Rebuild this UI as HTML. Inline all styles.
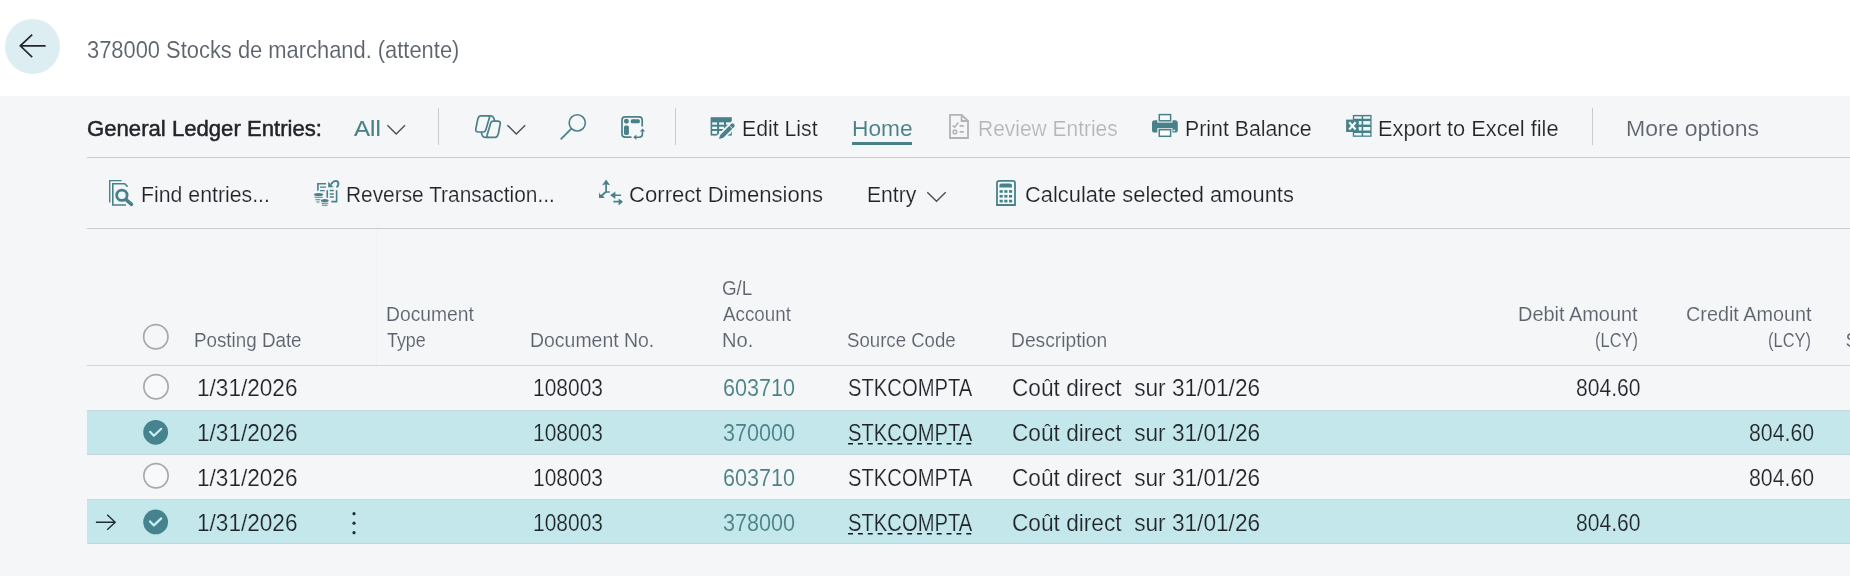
<!DOCTYPE html>
<html lang="en"><head><meta charset="utf-8"><title>General Ledger Entries</title>
<style>
html,body{margin:0;padding:0;}
body{width:1850px;height:576px;overflow:hidden;background:#f5f6f8;font-family:"Liberation Sans",sans-serif;position:relative;}
#texts{position:absolute;left:0;top:0;width:1850px;height:576px;will-change:transform;}
#layer{position:absolute;left:0;top:0;width:1850px;height:576px;display:block;}
.t{position:absolute;white-space:pre;line-height:1;transform-origin:0 0;font-family:"Liberation Sans",sans-serif;}
</style></head>
<body>
<svg id="layer" width="1850" height="576" viewBox="0 0 1850 576">
<rect x="0" y="0" width="1850" height="96" fill="#ffffff"/>
<circle cx="32.5" cy="46.5" r="27.5" fill="#ddeef3"/>
<path d="M45.6 45.8H20.6M32.2 34.7L20.3 45.8L32.2 57.1" fill="none" stroke="#23282c" stroke-width="1.7"/>
<rect x="87" y="157" width="1763" height="1" fill="#c9cbce"/>
<rect x="87" y="228" width="1763" height="1" fill="#c9cbce"/>
<rect x="438" y="108" width="1" height="37" fill="#c9cbce"/>
<rect x="675" y="108" width="1" height="37" fill="#c9cbce"/>
<rect x="1592" y="108" width="1" height="37" fill="#c9cbce"/>
<rect x="376" y="229" width="1" height="136" fill="#f0f1f4"/>
<rect x="87" y="365" width="1763" height="1" fill="#d2d4d7"/>
<rect x="87" y="410" width="1763" height="45" fill="#c3e7eb"/>
<rect x="87" y="410" width="1763" height="1" fill="#c5d9dc"/>
<rect x="87" y="454" width="1763" height="1" fill="#c8d4d7"/>
<rect x="87" y="499" width="1763" height="45" fill="#c3e7eb"/>
<rect x="87" y="499" width="1763" height="1" fill="#c5d9dc"/>
<rect x="87" y="543" width="1763" height="1" fill="#c8d4d7"/>
<rect x="852" y="142" width="60" height="3" fill="#4a8187"/>
<path d="M387.4 125.3L396.2 134L405 125.3" fill="none" stroke="#4b5056" stroke-width="1.4"/>
<path d="M507.4 125.2L516.3 133.9L525.2 125.2" fill="none" stroke="#4b5056" stroke-width="1.4"/>
<path d="M927.3 192.3L936.5 201.3L945.7 192.3" fill="none" stroke="#4b5056" stroke-width="1.4"/>
<circle cx="155.8" cy="336.8" r="12.15" fill="none" stroke="#a7a9ad" stroke-width="1.7"/>
<circle cx="156" cy="386.8" r="12.15" fill="#f8f9fb" stroke="#a7a9ad" stroke-width="1.7"/>
<circle cx="156" cy="475.8" r="12.15" fill="#f8f9fb" stroke="#a7a9ad" stroke-width="1.7"/>
<circle cx="155.65" cy="432.3" r="12.4" fill="#47828f"/>
<path d="M150.05 431.8L153.9 435.8L161.25 428.8" fill="none" stroke="#c9eef4" stroke-width="2.2" stroke-linecap="round" stroke-linejoin="round"/>
<circle cx="155.65" cy="521.9" r="12.4" fill="#47828f"/>
<path d="M150.05 521.4L153.9 525.4L161.25 518.4" fill="none" stroke="#c9eef4" stroke-width="2.2" stroke-linecap="round" stroke-linejoin="round"/>
<path d="M95.9 522.3H115M107.2 514.7L115.2 522.3L107.2 529.8" fill="none" stroke="#1f2d33" stroke-width="1.4"/>
<circle cx="354" cy="513.7" r="1.6" fill="#1f2d33"/>
<circle cx="354" cy="523.2" r="1.6" fill="#1f2d33"/>
<circle cx="354" cy="532.7" r="1.6" fill="#1f2d33"/>
<path d="M848.1 443.8H972.2" stroke="#101c22" stroke-width="1.6" stroke-dasharray="4.9 4.95"/>
<path d="M848.1 533.8H972.2" stroke="#101c22" stroke-width="1.6" stroke-dasharray="4.9 4.95"/>
<g fill="none" stroke="#48818a" stroke-width="1.7" stroke-linejoin="round"><path d="M480.8 115.9H488.2Q490 115.9 489.4 117.7L485.8 130Q485.2 132 483.2 132H478.4Q475.2 132 475.8 129L477.5 120.6Q478.3 115.9 480.8 115.9Z"/><path d="M493.2 121.2H497.6Q500.8 121.2 500.2 124L498.5 133Q497.6 137.4 495 137.4H488.6Q486.4 137.4 487 135.6L490.8 122.8Q491.3 121.2 493.2 121.2Z"/><path d="M488.2 115.9H490.8Q493 115.9 493.8 118L494.8 121.2"/><path d="M488.6 137.4H485.4Q483 137.4 482.2 135.2L481.2 132"/></g>
<g fill="none" stroke="#48818a"><circle cx="577.25" cy="122.85" r="8.1" stroke-width="1.6"/><path d="M571.4 128.7L560.7 139.4" stroke-width="1.8"/></g>
<g fill="none" stroke="#48818a" stroke-width="1.7"><path d="M642.2 126.4V120Q642.2 116.8 639 116.8H625.2Q622 116.8 622 120V134Q622 137.2 625.2 137.2H631.5"/><path d="M642.4 130V134Q642.4 137.2 639.2 137.2H635.2" stroke-width="1.6"/></g>
<g fill="#48818a"><circle cx="626.4" cy="121.2" r="2.45"/><rect x="630.7" y="119.3" width="9.2" height="3.9" rx="1.5"/><rect x="624" y="125.6" width="4.9" height="9.3" rx="1.7"/><path d="M639.9 131.6L642.5 128.4L645.1 131.6Z"/><path d="M636.4 134.5L633.3 137.2L636.4 139.9Z"/></g>
<rect x="710.6" y="117.2" width="21.2" height="18.4" fill="#48818a"/>
<rect x="712.2" y="122.4" width="4.9" height="2.3" fill="#eefafb"/>
<rect x="712.2" y="126.7" width="4.9" height="2.3" fill="#eefafb"/>
<rect x="712.2" y="131" width="4.9" height="2.9" fill="#eefafb"/>
<rect x="719.1" y="122.4" width="4.9" height="2.3" fill="#eefafb"/>
<rect x="719.1" y="126.7" width="4.9" height="2.3" fill="#eefafb"/>
<rect x="719.1" y="131" width="4.9" height="2.9" fill="#eefafb"/>
<rect x="726" y="122.4" width="4.9" height="2.3" fill="#eefafb"/>
<rect x="726" y="126.7" width="4.9" height="2.3" fill="#eefafb"/>
<rect x="726" y="131" width="4.9" height="2.9" fill="#eefafb"/>
<path d="M719.6 138.3L734.2 124" stroke="#f5f6f8" stroke-width="7.5" stroke-linecap="round"/>
<path d="M722.6 135.4L732.6 125.6" stroke="#48818a" stroke-width="4.2" stroke-linecap="round"/>
<path d="M718.9 139L720.4 134.6L723.6 137.7Z" fill="#48818a"/>
<path d="M729.2 125.4L732.9 129" stroke="#e4f3f5" stroke-width="0.9"/>
<g fill="none" stroke="#b1b3b7" stroke-width="1.8"><path d="M950 114.9H961.6L968 121V138H950Z"/><path d="M961.6 114.9V121H968"/><path d="M952.6 125.6L954.6 127.2L958.4 122.4" stroke-width="1.6"/><path d="M959.6 125.8H963.8M959.6 131.9H963.8"/><circle cx="954.9" cy="131.9" r="1.8" stroke-width="1.5"/></g>
<rect x="1152" y="120.2" width="25.8" height="12.3" rx="2.6" fill="#48818a"/>
<rect x="1157.3" y="113" width="15.2" height="9.6" fill="#f5f6f8"/>
<rect x="1159.3" y="114.6" width="11.3" height="6.2" fill="#f4fbfc" stroke="#48818a" stroke-width="1.5"/>
<rect x="1157.3" y="128" width="15.2" height="10" fill="#f5f6f8"/>
<rect x="1159.3" y="129.7" width="11.3" height="6.6" fill="#ffffff" stroke="#48818a" stroke-width="1.5"/>
<rect x="1157.3" y="126.6" width="15.2" height="1.6" fill="#48818a"/>
<rect x="1173.2" y="129.7" width="1.9" height="1.5" fill="#def2f4"/>
<rect x="1352.8" y="114.9" width="18.8" height="21.9" fill="#48818a"/>
<rect x="1354.2" y="116.4" width="7.4" height="2.3" fill="#f2fbfc"/>
<rect x="1354.2" y="121.1" width="7.4" height="3.5" fill="#f2fbfc"/>
<rect x="1354.2" y="127" width="7.4" height="3.5" fill="#f2fbfc"/>
<rect x="1354.2" y="133" width="7.4" height="2.5" fill="#f2fbfc"/>
<rect x="1363.2" y="116.4" width="7.1" height="2.3" fill="#f2fbfc"/>
<rect x="1363.2" y="121.1" width="7.1" height="3.5" fill="#f2fbfc"/>
<rect x="1363.2" y="127" width="7.1" height="3.5" fill="#f2fbfc"/>
<rect x="1363.2" y="133" width="7.1" height="2.5" fill="#f2fbfc"/>
<rect x="1346.1" y="119.6" width="12.7" height="12.4" fill="#48818a"/>
<path d="M1349.2 122.3L1355.6 129.5M1355.6 122.3L1349.2 129.5" stroke="#f2fbfc" stroke-width="2.1"/>
<g fill="none" stroke="#48818a"><path d="M109.7 202.4V180.6H121.6" stroke-width="1.4"/><path d="M126 205H112.8V183.7H124.7L127.6 186.6" stroke-width="1.6"/></g>
<circle cx="121.9" cy="195.25" r="7.6" fill="#f5f6f8"/>
<circle cx="121.9" cy="195.25" r="5.2" fill="#f1f9fa" stroke="#48818a" stroke-width="2.8"/>
<path d="M126 199.6L131.5 204.4" stroke="#48818a" stroke-width="3.5" stroke-linecap="round"/>
<g fill="none" stroke="#48818a" stroke-width="1.6"><path d="M317.9 190.8V183.7H326"/><path d="M320 187.1H326M320 190.6H324.7" stroke-width="1.3"/><path d="M327.25 190.2V197.8"/><path d="M329.75 190.6H333.8M329.75 194H333.8M329.75 196.9H333.8" stroke-width="1.5"/><path d="M336.6 190.2V201.6H331.3"/><path d="M331 184.4Q333.2 180.9 335.8 180.9Q338.6 181.1 338.4 184.2Q338.2 186.4 336.4 187.1" stroke-width="1.9"/><path d="M314.6 197.3H322.6M315.4 199.7H320.4M316.4 202H319.6M321.4 203.2H328.2M322 205.2H327.6" stroke-width="1.1"/></g>
<g fill="#48818a"><path d="M328.2 181.7V187.2H333.6Z"/><ellipse cx="318.6" cy="194.4" rx="4.6" ry="1.5"/><ellipse cx="324.8" cy="200.6" rx="3.9" ry="1.7"/></g>
<g fill="none" stroke="#48818a" stroke-width="1.7"><path d="M606.1 182V192H609.8"/><path d="M606.1 191.8L600 197" stroke-width="1.8"/><path d="M611 195.25H621M613.4 201.7H622" stroke-width="1.7"/></g>
<g fill="#48818a"><path d="M602 185.4L606.1 179.6L610.2 185.4L607.4 184.6H604.8Z"/><path d="M599 191.9V197.9H604.8L602.6 195.6L599.9 194.2Z"/><path d="M615.4 191.6L610.2 195.25L615.4 198.9Z"/><path d="M618.6 198.5L623 201.8L618.6 205.4Z"/></g>
<path d="M997 205V183Q997 180.8 999.2 180.8H1012.8Q1015 180.8 1015 183V205Z" fill="#f2fbfc" stroke="#48818a" stroke-width="1.8"/>
<path d="M999.4 187.4V185.4Q999.4 183.4 1001.4 183.4H1010Q1012 183.4 1012 185.4V187.4Z" fill="#48818a"/>
<rect x="999.6" y="190.1" width="3.15" height="2.7" fill="#48818a"/>
<rect x="999.6" y="194.9" width="3.15" height="2.7" fill="#48818a"/>
<rect x="999.6" y="199.75" width="3.15" height="2.7" fill="#48818a"/>
<rect x="1004.3" y="190.1" width="3.15" height="2.7" fill="#48818a"/>
<rect x="1004.3" y="194.9" width="3.15" height="2.7" fill="#48818a"/>
<rect x="1004.3" y="199.75" width="3.15" height="2.7" fill="#48818a"/>
<rect x="1009" y="190.1" width="3.15" height="2.7" fill="#48818a"/>
<rect x="1009" y="194.9" width="3.15" height="2.7" fill="#48818a"/>
<rect x="1009" y="199.75" width="3.15" height="2.7" fill="#48818a"/>
</svg>
<div id="texts">
<span class="t title" style="left:86.9px;top:37px;font-size:23px;line-height:26px;font-weight:400;transform:scaleX(0.9517);color:#5d636d;-webkit-text-stroke:0.1px #ffffff;">378000 Stocks de marchand. (attente)</span>
<span class="t " style="left:86.6px;top:115px;font-size:22.8px;line-height:26px;font-weight:400;transform:scaleX(0.9708);color:#212529;-webkit-text-stroke:0.5px #212529;">General Ledger Entries:</span>
<span class="t " style="left:353.6px;top:115px;font-size:22.8px;line-height:26px;font-weight:400;transform:scaleX(1.0585);color:#4a8187;-webkit-text-stroke:0.12px #4a8187;">All</span>
<span class="t " style="left:742.0px;top:115px;font-size:22.8px;line-height:26px;font-weight:400;transform:scaleX(0.9314);color:#212529;-webkit-text-stroke:0.2px #f5f6f8;">Edit List</span>
<span class="t " style="left:852.0px;top:115px;font-size:22.8px;line-height:26px;font-weight:400;transform:scaleX(0.9967);color:#4a8187;-webkit-text-stroke:0.1px #f5f6f8;">Home</span>
<span class="t " style="left:978.4px;top:115px;font-size:22.8px;line-height:26px;font-weight:400;transform:scaleX(0.9192);color:#b4b6ba;-webkit-text-stroke:0.2px #f5f6f8;">Review Entries</span>
<span class="t " style="left:1184.6px;top:115px;font-size:22.8px;line-height:26px;font-weight:400;transform:scaleX(0.9343);color:#212529;-webkit-text-stroke:0.2px #f5f6f8;">Print Balance</span>
<span class="t " style="left:1378.4px;top:115px;font-size:22.8px;line-height:26px;font-weight:400;transform:scaleX(0.9562);color:#212529;-webkit-text-stroke:0.2px #f5f6f8;">Export to Excel file</span>
<span class="t " style="left:1626.0px;top:115px;font-size:22.8px;line-height:26px;font-weight:400;transform:scaleX(1.0093);color:#5d636d;-webkit-text-stroke:0.15px #f5f6f8;">More options</span>
<span class="t " style="left:141.4px;top:181px;font-size:22.8px;line-height:26px;font-weight:400;transform:scaleX(0.9333);color:#212529;-webkit-text-stroke:0.2px #f5f6f8;">Find entries...</span>
<span class="t " style="left:346.0px;top:181px;font-size:22.8px;line-height:26px;font-weight:400;transform:scaleX(0.9156);color:#212529;-webkit-text-stroke:0.2px #f5f6f8;">Reverse Transaction...</span>
<span class="t " style="left:629.0px;top:181px;font-size:22.8px;line-height:26px;font-weight:400;transform:scaleX(0.9699);color:#212529;-webkit-text-stroke:0.2px #f5f6f8;">Correct Dimensions</span>
<span class="t " style="left:866.6px;top:181px;font-size:22.8px;line-height:26px;font-weight:400;transform:scaleX(0.9271);color:#212529;-webkit-text-stroke:0.2px #f5f6f8;">Entry</span>
<span class="t " style="left:1025.4px;top:181px;font-size:22.8px;line-height:26px;font-weight:400;transform:scaleX(0.9599);color:#212529;-webkit-text-stroke:0.2px #f5f6f8;">Calculate selected amounts</span>
<span class="t h" style="left:194.0px;top:330px;font-size:19.3px;line-height:21px;font-weight:400;transform:scaleX(0.9743);color:#5d636d;-webkit-text-stroke:0.12px #f5f6f8;">Posting Date</span>
<span class="t h" style="left:386.0px;top:304px;font-size:19.3px;line-height:21px;font-weight:400;transform:scaleX(1.0);color:#5d636d;-webkit-text-stroke:0.12px #f5f6f8;">Document</span>
<span class="t h" style="left:387.0px;top:330px;font-size:19.3px;line-height:21px;font-weight:400;transform:scaleX(0.9268);color:#5d636d;-webkit-text-stroke:0.12px #f5f6f8;">Type</span>
<span class="t h" style="left:530.0px;top:330px;font-size:19.3px;line-height:21px;font-weight:400;transform:scaleX(1.0083);color:#5d636d;-webkit-text-stroke:0.12px #f5f6f8;">Document No.</span>
<span class="t h" style="left:721.6px;top:278px;font-size:19.3px;line-height:21px;font-weight:400;transform:scaleX(0.9739);color:#5d636d;-webkit-text-stroke:0.12px #f5f6f8;">G/L</span>
<span class="t h" style="left:722.6px;top:304px;font-size:19.3px;line-height:21px;font-weight:400;transform:scaleX(0.9743);color:#5d636d;-webkit-text-stroke:0.12px #f5f6f8;">Account</span>
<span class="t h" style="left:721.6px;top:330px;font-size:19.3px;line-height:21px;font-weight:400;transform:scaleX(1.0435);color:#5d636d;-webkit-text-stroke:0.12px #f5f6f8;">No.</span>
<span class="t h" style="left:846.6px;top:330px;font-size:19.3px;line-height:21px;font-weight:400;transform:scaleX(0.9658);color:#5d636d;-webkit-text-stroke:0.12px #f5f6f8;">Source Code</span>
<span class="t h" style="left:1011.0px;top:330px;font-size:19.3px;line-height:21px;font-weight:400;transform:scaleX(0.998);color:#5d636d;-webkit-text-stroke:0.12px #f5f6f8;">Description</span>
<span class="t h" style="left:1518.4px;top:304px;font-size:19.3px;line-height:21px;font-weight:400;transform:scaleX(1.033);color:#5d636d;-webkit-text-stroke:0.12px #f5f6f8;">Debit Amount</span>
<span class="t h" style="left:1595.4px;top:330px;font-size:19.3px;line-height:21px;font-weight:400;transform:scaleX(0.8532);color:#5d636d;-webkit-text-stroke:0.12px #f5f6f8;">(LCY)</span>
<span class="t h" style="left:1685.6px;top:304px;font-size:19.3px;line-height:21px;font-weight:400;transform:scaleX(1.0265);color:#5d636d;-webkit-text-stroke:0.12px #f5f6f8;">Credit Amount</span>
<span class="t h" style="left:1768.4px;top:330px;font-size:19.3px;line-height:21px;font-weight:400;transform:scaleX(0.8532);color:#5d636d;-webkit-text-stroke:0.12px #f5f6f8;">(LCY)</span>
<span class="t " style="left:196.7px;top:375px;font-size:23.2px;line-height:26px;font-weight:400;transform:scaleX(0.9741);color:#212529;-webkit-text-stroke:0.2px #f5f6f8;">1/31/2026</span>
<span class="t " style="left:533.0px;top:375px;font-size:23.2px;line-height:26px;font-weight:400;transform:scaleX(0.9041);color:#212529;-webkit-text-stroke:0.2px #f5f6f8;">108003</span>
<span class="t " style="left:723.4px;top:375px;font-size:23.2px;line-height:26px;font-weight:400;transform:scaleX(0.9316);color:#4a8187;-webkit-text-stroke:0.1px #f5f6f8;">603710</span>
<span class="t " style="left:848.0px;top:375px;font-size:23.2px;line-height:26px;font-weight:400;transform:scaleX(0.8723);color:#212529;-webkit-text-stroke:0.2px #f5f6f8;">STKCOMPTA</span>
<span class="t " style="left:1012.0px;top:375px;font-size:23.2px;line-height:26px;font-weight:400;transform:scaleX(0.977);color:#212529;-webkit-text-stroke:0.2px #f5f6f8;">Coût direct  sur 31/01/26</span>
<span class="t " style="left:1576.0px;top:375px;font-size:23.2px;line-height:26px;font-weight:400;transform:scaleX(0.9102);color:#212529;-webkit-text-stroke:0.2px #f5f6f8;">804.60</span>
<span class="t " style="left:196.7px;top:420px;font-size:23.2px;line-height:26px;font-weight:400;transform:scaleX(0.9741);color:#212529;-webkit-text-stroke:0.2px #c3e7eb;">1/31/2026</span>
<span class="t " style="left:533.0px;top:420px;font-size:23.2px;line-height:26px;font-weight:400;transform:scaleX(0.9041);color:#212529;-webkit-text-stroke:0.2px #c3e7eb;">108003</span>
<span class="t " style="left:723.4px;top:420px;font-size:23.2px;line-height:26px;font-weight:400;transform:scaleX(0.9316);color:#4a8187;-webkit-text-stroke:0.1px #c3e7eb;">370000</span>
<span class="t u" style="left:848.0px;top:420px;font-size:23.2px;line-height:26px;font-weight:400;transform:scaleX(0.8723);color:#212529;-webkit-text-stroke:0.2px #c3e7eb;">STKCOMPTA</span>
<span class="t " style="left:1012.0px;top:420px;font-size:23.2px;line-height:26px;font-weight:400;transform:scaleX(0.977);color:#212529;-webkit-text-stroke:0.2px #c3e7eb;">Coût direct  sur 31/01/26</span>
<span class="t " style="left:1748.6px;top:420px;font-size:23.2px;line-height:26px;font-weight:400;transform:scaleX(0.9188);color:#212529;-webkit-text-stroke:0.2px #c3e7eb;">804.60</span>
<span class="t " style="left:196.7px;top:465px;font-size:23.2px;line-height:26px;font-weight:400;transform:scaleX(0.9741);color:#212529;-webkit-text-stroke:0.2px #f5f6f8;">1/31/2026</span>
<span class="t " style="left:533.0px;top:465px;font-size:23.2px;line-height:26px;font-weight:400;transform:scaleX(0.9041);color:#212529;-webkit-text-stroke:0.2px #f5f6f8;">108003</span>
<span class="t " style="left:723.4px;top:465px;font-size:23.2px;line-height:26px;font-weight:400;transform:scaleX(0.9316);color:#4a8187;-webkit-text-stroke:0.1px #f5f6f8;">603710</span>
<span class="t " style="left:848.0px;top:465px;font-size:23.2px;line-height:26px;font-weight:400;transform:scaleX(0.8723);color:#212529;-webkit-text-stroke:0.2px #f5f6f8;">STKCOMPTA</span>
<span class="t " style="left:1012.0px;top:465px;font-size:23.2px;line-height:26px;font-weight:400;transform:scaleX(0.977);color:#212529;-webkit-text-stroke:0.2px #f5f6f8;">Coût direct  sur 31/01/26</span>
<span class="t " style="left:1748.6px;top:465px;font-size:23.2px;line-height:26px;font-weight:400;transform:scaleX(0.9188);color:#212529;-webkit-text-stroke:0.2px #f5f6f8;">804.60</span>
<span class="t " style="left:196.7px;top:510px;font-size:23.2px;line-height:26px;font-weight:400;transform:scaleX(0.9741);color:#212529;-webkit-text-stroke:0.2px #c3e7eb;">1/31/2026</span>
<span class="t " style="left:533.0px;top:510px;font-size:23.2px;line-height:26px;font-weight:400;transform:scaleX(0.9041);color:#212529;-webkit-text-stroke:0.2px #c3e7eb;">108003</span>
<span class="t " style="left:723.4px;top:510px;font-size:23.2px;line-height:26px;font-weight:400;transform:scaleX(0.9316);color:#4a8187;-webkit-text-stroke:0.1px #c3e7eb;">378000</span>
<span class="t u" style="left:848.0px;top:510px;font-size:23.2px;line-height:26px;font-weight:400;transform:scaleX(0.8723);color:#212529;-webkit-text-stroke:0.2px #c3e7eb;">STKCOMPTA</span>
<span class="t " style="left:1012.0px;top:510px;font-size:23.2px;line-height:26px;font-weight:400;transform:scaleX(0.977);color:#212529;-webkit-text-stroke:0.2px #c3e7eb;">Coût direct  sur 31/01/26</span>
<span class="t " style="left:1576.0px;top:510px;font-size:23.2px;line-height:26px;font-weight:400;transform:scaleX(0.9102);color:#212529;-webkit-text-stroke:0.2px #c3e7eb;">804.60</span>
<span class="t h" style="left:1845.4px;top:330px;font-size:19.3px;line-height:21px;color:#5d636d;-webkit-text-stroke:0.12px #f5f6f8">S</span>
</div>
</body></html>
